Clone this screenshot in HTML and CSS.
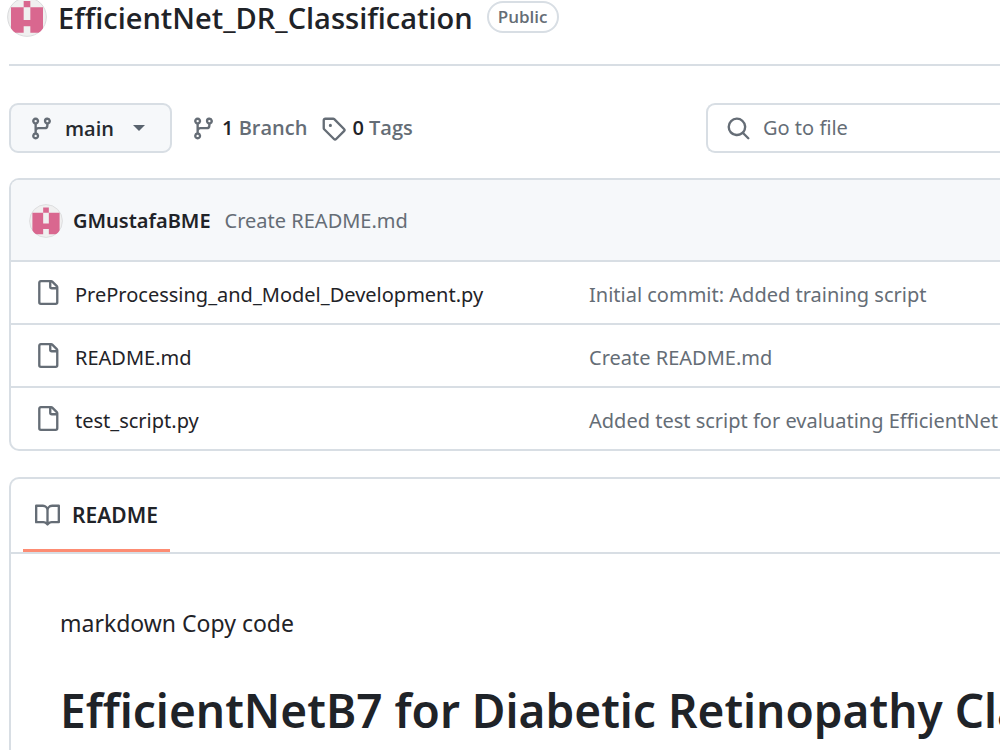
FILE: index.html
```html
<!DOCTYPE html>
<html lang="en">
<head>
    <meta charset="UTF-8">
    <meta name="viewport" content="width=device-width, initial-scale=1.0">
    <title>EfficientNet_DR_Classification</title>
    <link rel="stylesheet" href="styles.css">
</head>
<body>
    <!-- shared icons -->
    <svg class="sprite" aria-hidden="true">
        <symbol id="avatar" viewBox="0 0 120 120">
            <clipPath id="round"><circle cx="60" cy="60" r="59"/></clipPath>
            <circle cx="60" cy="60" r="58" fill="#f0f0f0" stroke="#d9dadc" stroke-width="3"/>
            <path clip-path="url(#round)" fill="#d9678f" d="M50 12h20v19h38v76H70V88H50v19H12V31h38zM50 31v38h20V31z" fill-rule="evenodd"/>
        </symbol>
        <symbol id="branch" viewBox="0 0 16 16">
            <path d="M9.5 3.25a2.25 2.25 0 1 1 3 2.122V6A2.5 2.5 0 0 1 10 8.5H6a1 1 0 0 0-1 1v1.128a2.251 2.251 0 1 1-1.5 0V5.372a2.25 2.25 0 1 1 1.5 0v1.836A2.493 2.493 0 0 1 6 7h4a1 1 0 0 0 1-1v-.628A2.25 2.25 0 0 1 9.5 3.25Zm-6 0a.75.75 0 1 0 1.5 0 .75.75 0 0 0-1.5 0Zm8.25-.75a.75.75 0 1 0 0 1.5.75.75 0 0 0 0-1.5ZM4.25 12a.75.75 0 1 0 0 1.5.75.75 0 0 0 0-1.5Z"/>
        </symbol>
        <symbol id="tag" viewBox="0 0 16 16">
            <path d="M1 7.775V2.75C1 1.784 1.784 1 2.75 1h5.025c.464 0 .91.184 1.238.513l6.25 6.25a1.75 1.75 0 0 1 0 2.474l-5.026 5.026a1.75 1.75 0 0 1-2.474 0l-6.25-6.25A1.752 1.752 0 0 1 1 7.775Zm1.5 0c0 .066.026.13.073.177l6.25 6.25a.25.25 0 0 0 .354 0l5.025-5.025a.25.25 0 0 0 0-.354l-6.25-6.25a.25.25 0 0 0-.177-.073H2.75a.25.25 0 0 0-.25.25ZM6 5a1 1 0 1 1 0 2 1 1 0 0 1 0-2Z"/>
        </symbol>
        <symbol id="search" viewBox="0 0 16 16">
            <path d="M10.68 11.74a6 6 0 0 1-7.922-8.982 6 6 0 0 1 8.982 7.922l3.04 3.04a.749.749 0 1 1-1.06 1.06ZM11.5 7a4.499 4.499 0 1 0-8.997 0A4.499 4.499 0 0 0 11.5 7Z"/>
        </symbol>
        <symbol id="file" viewBox="0 0 16 16">
            <path d="M2 1.75C2 .784 2.784 0 3.75 0h6.586c.464 0 .909.184 1.237.513l2.914 2.914c.329.328.513.773.513 1.237v9.586A1.75 1.75 0 0 1 13.25 16h-9.5A1.75 1.75 0 0 1 2 14.25Zm1.75-.25a.25.25 0 0 0-.25.25v12.5c0 .138.112.25.25.25h9.5a.25.25 0 0 0 .25-.25V6h-2.75A1.75 1.75 0 0 1 9 4.25V1.5Zm6.75.062V4.25c0 .138.112.25.25.25h2.688l-.011-.013-2.914-2.914-.013-.011Z"/>
        </symbol>
        <symbol id="book" viewBox="0 0 16 16">
            <path d="M0 1.75A.75.75 0 0 1 .75 1h4.253c1.227 0 2.317.59 3 1.501A3.743 3.743 0 0 1 11.006 1h4.245a.75.75 0 0 1 .75.75v10.5a.75.75 0 0 1-.75.75h-4.507a2.25 2.25 0 0 0-1.591.659l-.622.621a.75.75 0 0 1-1.06 0l-.622-.621A2.25 2.25 0 0 0 5.258 13H.75a.75.75 0 0 1-.75-.75Zm7.251 10.324.004-5.073-.002-2.253A2.25 2.25 0 0 0 5.003 2.5H1.5v9h3.757a3.75 3.75 0 0 1 1.994.574ZM8.755 4.75l-.004 7.322a3.752 3.752 0 0 1 1.992-.572H14.5v-9h-3.495a2.25 2.25 0 0 0-2.25 2.25Z"/>
        </symbol>
    </svg>

    <header class="repo-header">
        <svg class="avatar-large"><use href="#avatar"/></svg>
        <a href="#" class="repo-name">EfficientNet_DR_Classification</a>
        <span class="label">Public</span>
    </header>

    <div class="toolbar">
        <button type="button" class="branch-button">
            <svg class="icon"><use href="#branch"/></svg>
            <span>main</span>
            <span class="caret"></span>
        </button>
        <nav class="ref-links">
            <a href="#"><svg class="icon"><use href="#branch"/></svg><span><strong>1</strong> Branch</span></a>
            <a href="#"><svg class="icon"><use href="#tag"/></svg><span><strong>0</strong> Tags</span></a>
        </nav>
        <label class="search-box">
            <svg class="icon"><use href="#search"/></svg>
            <input type="text" placeholder="Go to file" aria-label="Go to file">
        </label>
    </div>

    <section class="box files">
        <div class="commit-bar">
            <svg class="avatar-small"><use href="#avatar"/></svg>
            <a href="#" class="author">GMustafaBME</a>
            <a href="#" class="message">Create README.md</a>
        </div>
        <table>
            <tbody>
                <tr>
                    <td><a href="#" class="file-link"><svg class="icon"><use href="#file"/></svg>PreProcessing_and_Model_Development.py</a></td>
                    <td><a href="#" class="message">Initial commit: Added training script</a></td>
                </tr>
                <tr>
                    <td><a href="#" class="file-link"><svg class="icon"><use href="#file"/></svg>README.md</a></td>
                    <td><a href="#" class="message">Create README.md</a></td>
                </tr>
                <tr>
                    <td><a href="#" class="file-link"><svg class="icon"><use href="#file"/></svg>test_script.py</a></td>
                    <td><a href="#" class="message">Added test script for evaluating EfficientNet</a></td>
                </tr>
            </tbody>
        </table>
    </section>

    <section class="box readme">
        <nav class="tabs">
            <a href="#" class="tab"><svg class="icon"><use href="#book"/></svg>README</a>
        </nav>
        <article class="markdown">
            <p>markdown Copy code</p>
            <h1>EfficientNetB7 for Diabetic Retinopathy Classification</h1>
        </article>
    </section>
</body>
</html>
```
FILE: styles.css
```css
* {
    box-sizing: border-box;
}

html {
    overflow: hidden;
}

body {
    display: flex;
    flex-direction: column;
    min-height: 100vh;
    margin: 0;
    padding-left: 9px;
    background: #ffffff;
    color: #1f2328;
    font-family: "Noto Sans", "Open Sans", sans-serif;
    font-size: 20px;
    line-height: 30px;
    overflow: hidden;
}

a {
    color: inherit;
    text-decoration: none;
}

strong {
    font-weight: 600;
    color: #1f2328;
}

.sprite {
    position: absolute;
    width: 0;
    height: 0;
}

.icon {
    width: 25px;
    height: 25px;
    flex-shrink: 0;
    fill: #656d76;
}

.repo-header {
    display: flex;
    align-items: center;
    height: 70px;
    margin-top: -4px;
    padding-bottom: 26px;
    border-bottom: 2px solid #d8dee4;
}

.avatar-large {
    width: 40px;
    height: 40px;
    margin-left: -2px;
    margin-right: 11px;
}

.repo-name {
    padding-top: 2px;
    font-family: "Open Sans", sans-serif;
    font-size: 29px;
    font-weight: 600;
}

.label {
    margin-left: 14px;
    padding: 0 9px;
    border: 2px solid #d8dee4;
    border-radius: 16px;
    font-family: "Open Sans", sans-serif;
    font-size: 17px;
    font-weight: 600;
    line-height: 28px;
    color: #656d76;
}

.toolbar {
    display: flex;
    align-items: center;
    margin: 37px 0 25px;
}

.branch-button {
    display: flex;
    align-items: center;
    width: 163px;
    height: 50px;
    padding: 0 20px 0 18px;
    border: 2px solid #d8dee4;
    border-radius: 9px;
    background: #f6f8fa;
    color: #25292e;
    font-family: "Open Sans", sans-serif;
    font-size: 20px;
    font-weight: 600;
    gap: 11px;
}

.caret {
    margin-left: 8px;
    border: 6px solid transparent;
    border-top-color: #59636e;
    border-bottom: 0;
}

.ref-links {
    display: flex;
    gap: 14px;
    margin-left: 19px;
    color: #656d76;
    font-family: "Open Sans", sans-serif;
    font-weight: 600;
}

.ref-links a {
    display: flex;
    align-items: center;
    gap: 6px;
}

.search-box {
    display: flex;
    align-items: center;
    width: 294px;
    height: 50px;
    margin-left: auto;
    padding-left: 18px;
    border: 2px solid #d8dee4;
    border-right: 0;
    border-radius: 9px 0 0 9px;
    gap: 12px;
}

.search-box input {
    width: 100%;
    padding: 0;
    border: 0;
    outline: 0;
    background: transparent;
    font: inherit;
}

.search-box input::placeholder {
    color: #656d76;
    opacity: 1;
}

.box {
    border: 2px solid #d8dee4;
    border-right: 0;
    border-radius: 10px 0 0 10px;
    overflow: hidden;
}

.commit-bar {
    display: flex;
    align-items: center;
    height: 80px;
    padding: 2px 0 0 18px;
    background: #f6f8fa;
}

.avatar-small {
    width: 34px;
    height: 34px;
    margin-right: 10px;
}

.author {
    margin-right: 14px;
    font-weight: 600;
}

.message {
    color: #656d76;
}

table {
    width: 100%;
    border-collapse: separate;
    border-spacing: 0;
    table-layout: fixed;
}

td {
    height: 63px;
    padding: 4px 0 0;
    border-top: 2px solid #d8dee4;
    white-space: nowrap;
}

td:first-child {
    width: 578px;
    padding-left: 24px;
}

.file-link {
    display: flex;
    align-items: center;
    gap: 15px;
}

.file-link .icon {
    margin-bottom: 4px;
}

.readme {
    flex: 1;
    margin-top: 26px;
    border-bottom: 0;
    border-radius: 10px 0 0 0;
}

.tabs {
    display: flex;
    height: 75px;
    padding-left: 12px;
    border-bottom: 2px solid #d8dee4;
}

.tab {
    display: flex;
    align-items: center;
    padding: 2px 12px 0;
    border-bottom: 3px solid #fd8c73;
    font-size: 21px;
    font-weight: 600;
    gap: 12px;
}

.markdown {
    padding: 50px 0 0 49px;
    white-space: nowrap;
}

.markdown p {
    margin: 0;
    font-size: 23px;
    line-height: 38px;
}

.markdown h1 {
    margin: 38px 0 0;
    font-size: 46px;
    font-weight: 600;
    line-height: 60px;
}
```
